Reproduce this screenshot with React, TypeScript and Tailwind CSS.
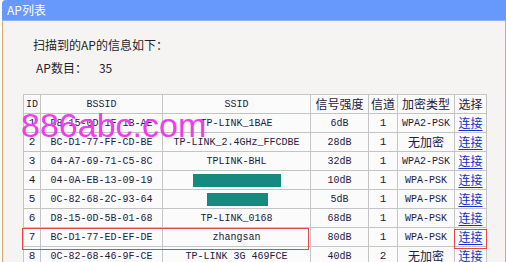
import * as React from "react";

type Ap = {
  id: number;
  bssid: string;
  ssid: string;
  signal: string;
  channel: number;
  enc: string;
  hidden?: "long" | "short";
  marked?: boolean;
};

const aps: Ap[] = [
  { id: 1, bssid: "D8-15-0D-1F-1B-AE", ssid: "TP-LINK_1BAE", signal: "6dB", channel: 1, enc: "WPA2-PSK" },
  { id: 2, bssid: "BC-D1-77-FF-CD-BE", ssid: "TP-LINK_2.4GHz_FFCDBE", signal: "28dB", channel: 1, enc: "无加密" },
  { id: 3, bssid: "64-A7-69-71-C5-8C", ssid: "TPLINK-BHL", signal: "32dB", channel: 1, enc: "WPA2-PSK" },
  { id: 4, bssid: "04-0A-EB-13-09-19", ssid: "", signal: "10dB", channel: 1, enc: "WPA-PSK", hidden: "long" },
  { id: 5, bssid: "0C-82-68-2C-93-64", ssid: "", signal: "5dB", channel: 1, enc: "WPA-PSK", hidden: "short" },
  { id: 6, bssid: "D8-15-0D-5B-01-68", ssid: "TP-LINK_0168", signal: "68dB", channel: 1, enc: "WPA-PSK" },
  { id: 7, bssid: "BC-D1-77-ED-EF-DE", ssid: "zhangsan", signal: "80dB", channel: 1, enc: "WPA-PSK", marked: true },
  { id: 8, bssid: "0C-82-68-46-9F-CE", ssid: "TP-LINK 3G 469FCE", signal: "40dB", channel: 2, enc: "无加密" },
];

const mono = "font-['Liberation_Mono','Noto_Sans_CJK_SC',monospace] text-[10px]";
const cjk = "font-['Noto_Sans_CJK_SC',sans-serif] text-[12px]";
const cell = "border border-[#c4c4c4] h-[19px] p-0 text-center align-middle whitespace-nowrap";

const App = () => {
  return (
    <div className="w-[506px] h-[262px] overflow-hidden bg-white relative">
      <div className="ml-[2px] w-[504px] h-full flex flex-col">
        <div className="h-[21px] shrink-0 bg-[#6699fb] rounded-tl-[4px] border-b border-[#8fb2f5] flex items-center pl-[5px]">
          <span className="text-white text-[12px] font-['Noto_Sans_CJK_SC',sans-serif] leading-none">AP列表</span>
        </div>

        <div className="flex-1 bg-[#f5f4f2] border-l border-r border-[#d8ac68] text-[#1f1f2e]">
          <p className={`${cjk} leading-[16px] mt-[16px] ml-[30px]`}>扫描到的AP的信息如下：</p>
          <p className={`${cjk} leading-[16px] mt-[7px] ml-[33px] flex`}>
            <span>AP数目：</span>
            <span className="ml-[12px]">35</span>
          </p>

          <table className="mt-[18px] ml-[20px] border-collapse bg-[#fbfbfb] text-[#1e2040]">
            <thead>
              <tr>
                <th className={`${cell} ${mono} font-normal w-[17px]`}>ID</th>
                <th className={`${cell} ${mono} font-normal w-[122px]`}>BSSID</th>
                <th className={`${cell} ${mono} font-normal w-[148px]`}>SSID</th>
                <th className={`${cell} ${cjk} font-normal w-[58px]`}>信号强度</th>
                <th className={`${cell} ${cjk} font-normal w-[29px]`}>信道</th>
                <th className={`${cell} ${cjk} font-normal w-[57px]`}>加密类型</th>
                <th className={`${cell} ${cjk} font-normal w-[32px]`}>选择</th>
              </tr>
            </thead>
            <tbody>
              {aps.map((ap) => (
                <tr key={ap.id}>
                  <td className={`${cell} ${mono} text-[11px]`}>{ap.id}</td>
                  <td className={`${cell} ${mono}`}>{ap.bssid}</td>
                  <td className={`${cell} ${mono}`}>
                    {ap.hidden === "long" && <div className="ml-[30px] w-[88px] h-[13px] bg-[#168a7e]" />}
                    {ap.hidden === "short" && <div className="ml-[44px] w-[61px] h-[13px] bg-[#168a7e]" />}
                    {!ap.hidden && ap.ssid}
                  </td>
                  <td className={`${cell} ${mono}`}>{ap.signal}</td>
                  <td className={`${cell} ${mono} text-[11px]`}>{ap.channel}</td>
                  <td className={`${cell} ${ap.enc === "无加密" ? cjk : mono}`}>{ap.enc}</td>
                  <td className={`${cell} ${cjk} relative`}>
                    <span className="text-[#1530c8] underline underline-offset-2">连接</span>
                    {ap.marked && (
                      <div className="absolute inset-x-[-1px] top-[1px] bottom-[-3px] border border-[#e04848]" />
                    )}
                  </td>
                </tr>
              ))}
            </tbody>
          </table>
        </div>
      </div>

      {/* red box round row 7 (id .. ssid) */}
      <div className="absolute left-[22px] top-[228px] w-[287px] h-[22px] border border-[#e04848] pointer-events-none" />

      {/* watermark */}
      <div className="absolute left-[21px] top-[104px] text-[34px] leading-[42px] text-[#ef3ee9] font-['Liberation_Sans',sans-serif] pointer-events-none">
        886abc.com
      </div>
    </div>
  );
};

export default App;
